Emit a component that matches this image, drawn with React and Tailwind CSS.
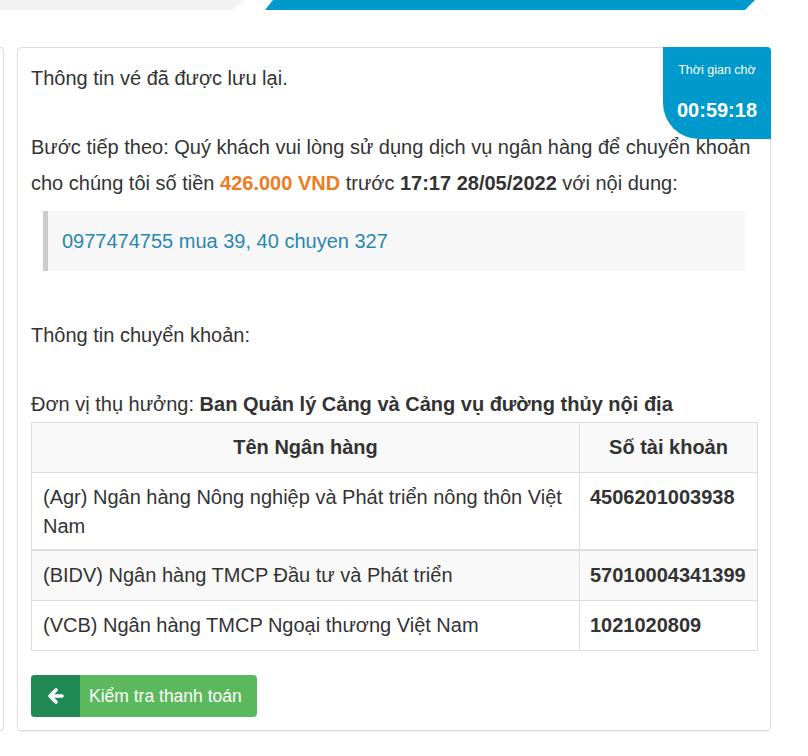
import React from 'react';

const banks = [
  { name: '(Agr) Ngân hàng Nông nghiệp và Phát triển nông thôn Việt Nam', acc: '4506201003938', first: true },
  { name: '(BIDV) Ngân hàng TMCP Đầu tư và Phát triển', acc: '57010004341399', striped: true, thick: true },
  { name: '(VCB) Ngân hàng TMCP Ngoại thương Việt Nam', acc: '1021020809' },
];

function ArrowLeft() {
  return (
    <svg width="18" height="18" viewBox="0 0 18 18" fill="none">
      <path d="M9 3 L3 9 L9 15" stroke="#fff" strokeWidth="3.6" strokeLinecap="round" strokeLinejoin="round" />
      <path d="M4 9 H15" stroke="#fff" strokeWidth="3.6" strokeLinecap="round" />
    </svg>
  );
}

export default function App() {
  return (
    <div className="w-[808px] h-[756px] bg-white text-[#333] font-['Liberation_Sans',Arial,sans-serif] overflow-hidden">
      <div className="flex h-[10px]">
        <div className="w-[245px] bg-[#f2f2f2] [clip-path:polygon(0_0,100%_0,calc(100%-13px)_100%,0_100%)]" />
        <div className="ml-[20px] w-[490px] bg-[#0099cc] [clip-path:polygon(8px_0,100%_0,calc(100%-10px)_100%,0_100%)]" />
      </div>

      <div className="flex mt-[37px]">
        <div className="w-[4px] h-[684px] border-y border-r border-[#ddd] rounded-r-[4px]" />
        <div className="relative ml-[13px] w-[754px] h-[684px] border border-[#ddd] rounded-[4px] shadow-[0_1px_1px_rgba(0,0,0,0.05)] px-[13px] pt-[12px]">
          <div className="absolute -top-px -right-px w-[108px] h-[92px] bg-[#0099cc] rounded-tr-[4px] rounded-bl-[36px] text-white text-center">
            <div className="mt-[15px] text-[12.5px] leading-[16px]">Thời gian chờ</div>
            <div className="mt-[20px] text-[20px] font-bold leading-[24px]">00:59:18</div>
          </div>

          <p className="text-[20px] leading-[36px]">Thông tin vé đã được lưu lại.</p>

          <p className="mt-[33px] text-[20px] leading-[36px]">
            Bước tiếp theo: Quý khách vui lòng sử dụng dịch vụ ngân hàng để chuyển khoản cho chúng tôi số tiền{' '}
            <b className="text-[#ec7d22]">426.000 VND</b> trước <b>17:17 28/05/2022</b> với nội dung:
          </p>

          <blockquote className="mt-[10px] mx-[12px] h-[60px] flex items-center bg-[#f7f7f7] border-l-[5px] border-[#ccc] pl-[14px] text-[20px] text-[#2a87b1]">
            0977474755 mua 39, 40 chuyen 327
          </blockquote>

          <p className="mt-[46px] text-[20px] leading-[36px]">Thông tin chuyển khoản:</p>

          <p className="mt-[34px] text-[20px] leading-[35px]">
            Đơn vị thụ hưởng: <b>Ban Quản lý Cảng và Cảng vụ đường thủy nội địa</b>
          </p>

          <table className="w-[727px] border-collapse text-[20px] leading-[29px]">
            <thead>
              <tr className="bg-[#f9f9f9]">
                <th className="border border-[#ddd] py-[10px] px-[11px] font-bold text-center">Tên Ngân hàng</th>
                <th className="w-[178px] border border-[#ddd] py-[10px] px-[11px] font-bold text-center">Số tài khoản</th>
              </tr>
            </thead>
            <tbody>
              {banks.map((b) => (
                <tr key={b.acc} className={b.striped ? 'bg-[#f9f9f9]' : 'bg-white'}>
                  <td className={`border border-[#ddd] pt-[10px] px-[11px] align-top ${b.first ? 'pb-[8px]' : 'pb-[10px]'} ${b.thick ? 'border-t-2' : ''}`}>{b.name}</td>
                  <td className={`border border-[#ddd] pt-[10px] px-[10px] align-top font-bold ${b.first ? 'pb-[8px]' : 'pb-[10px]'} ${b.thick ? 'border-t-2' : ''}`}>{b.acc}</td>
                </tr>
              ))}
            </tbody>
          </table>

          <button className="mt-[24px] flex h-[42px] w-[226px] rounded-[4px] overflow-hidden bg-[#5cb85c] text-white text-[17.5px]">
            <span className="w-[49px] h-full flex items-center justify-center bg-[#218a54]">
              <ArrowLeft />
            </span>
            <span className="flex items-center pl-[9px]">Kiểm tra thanh toán</span>
          </button>
        </div>
      </div>
    </div>
  );
}
